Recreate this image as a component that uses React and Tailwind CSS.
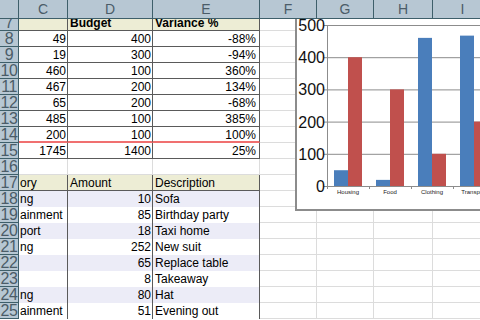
import React from "react";

const font = { fontFamily: '"Liberation Sans", Arial, sans-serif' };

const hdrCell = "h-full shrink-0 bg-[#b7c7d3] border-r border-b border-[#3e5f6a] text-[#4b5c68]";
const dark = "h-full shrink-0 border-r border-b border-[#5a5a5a]";
const light = "h-full shrink-0 border-r border-b border-[#dcdcdc]";

const top = [
  ["49", "400", "-88%"],
  ["19", "300", "-94%"],
  ["460", "100", "360%"],
  ["467", "200", "134%"],
  ["65", "200", "-68%"],
  ["485", "100", "385%"],
  ["200", "100", "100%"],
  ["1745", "1400", "25%"],
];

const expenses = [
  ["ng", "10", "Sofa"],
  ["ainment", "85", "Birthday party"],
  ["port", "18", "Taxi home"],
  ["ng", "252", "New suit"],
  ["", "65", "Replace table"],
  ["", "8", "Takeaway"],
  ["ng", "80", "Hat"],
  ["ainment", "51", "Evening out"],
];

const RowNum = ({ n }) => (
  <div className={`${hdrCell} w-[19px] text-center text-[16px] leading-4 tracking-[-0.5px]`}>{n}</div>
);

const Rest = () => (
  <>
    <div className={`${light} w-[57px]`} />
    <div className={`${light} w-[57px]`} />
    <div className={`${light} w-[59px]`} />
    <div className={`${light} w-[60px]`} />
  </>
);

const Chart = () => {
  const y = (v) => 186 - v * 0.322;
  const data = [
    ["Housing", 49, 400],
    ["Food", 19, 300],
    ["Clothing", 460, 100],
    ["Transport", 467, 200],
  ];
  return (
    <div className="absolute left-[295px] top-[19px] w-[185px] h-[192px] bg-white border-l-2 border-b-2 border-[#8c8c8c] z-10">
      <svg width="183" height="190" viewBox="297 19 183 190" style={font}>
        {[500, 400, 300, 200, 100, 0].map((v) => (
          <g key={v}>
            <line x1="324" x2="480" y1={y(v) + 0.5} y2={y(v) + 0.5} stroke="#8c8c8c" />
            <text x="325" y={y(v) + 6} fontSize="16" textAnchor="end" fill="#111">{v}</text>
          </g>
        ))}
        <line x1="327.5" x2="327.5" y1="25" y2="186" stroke="#8c8c8c" />
        {[327.5, 369.5, 411.5, 453.5].map((x) => (
          <line key={x} x1={x} x2={x} y1="186" y2="189" stroke="#8c8c8c" />
        ))}
        {data.map(([name, a, b], i) => {
          const x = 334 + i * 42;
          return (
            <g key={name}>
              <rect x={x} y={y(a)} width="14" height={186 - y(a)} fill="#4a7ebb" />
              <rect x={x + 14} y={y(b)} width="14" height={186 - y(b)} fill="#c0504d" />
              <text x={x + 14} y="194" fontSize="6" textAnchor="middle" fill="#222">{name}</text>
            </g>
          );
        })}
      </svg>
    </div>
  );
};

export default function App() {
  return (
    <div className="relative w-[480px] h-[320px] overflow-hidden bg-white text-[12px] text-black" style={font}>
      {/* column headers */}
      <div className="relative z-20 flex h-[19px]">
        <div className={`${hdrCell} w-[19px]`} />
        {[["C", 49], ["D", 85], ["E", 107], ["F", 57], ["G", 57], ["H", 59], ["I", 60]].map(([l, w]) => (
          <div
            key={l}
            className={`${hdrCell} text-center text-[14px] leading-[19px] ${
              w === 49 ? "w-[49px]" : w === 85 ? "w-[85px]" : w === 107 ? "w-[107px]" : w === 57 ? "w-[57px]" : w === 59 ? "w-[59px]" : "w-[60px]"
            }`}
          >
            {l}
          </div>
        ))}
      </div>

      {/* row 7, scrolled half under the header */}
      <div className="h-[12px] overflow-hidden">
        <div className="flex h-4 -mt-[4px]">
          <RowNum n="7" />
          <div className={`${dark} w-[49px] bg-[#ededd5]`} />
          <div className={`${dark} w-[85px] bg-[#ededd5] pl-[2px] font-bold leading-4`}>Budget</div>
          <div className={`${dark} w-[107px] bg-[#ededd5] pl-[2px] font-bold leading-4`}>Variance %</div>
          <Rest />
        </div>
      </div>

      {top.map(([c, d, e], i) => {
        const n = 8 + i;
        const b = n === 14 ? "border-b-2 border-b-[#f07070]" : "";
        return (
          <div key={n} className="flex h-4 leading-4">
            <RowNum n={n} />
            <div className={`${dark} ${b} w-[49px] text-right pr-px`}>{c}</div>
            <div className={`${dark} ${b} w-[85px] text-right pr-px`}>{d}</div>
            <div className={`${dark} ${b} w-[107px] text-right pr-[3px]`}>{e}</div>
            <Rest />
          </div>
        );
      })}

      <div className="flex h-4">
        <RowNum n="16" />
        <div className={`${light} w-[49px]`} />
        <div className={`${light} w-[85px]`} />
        <div className={`${light} w-[107px]`} />
        <Rest />
      </div>

      <div className="flex h-4 leading-4">
        <RowNum n="17" />
        <div className={`${dark} w-[49px] bg-[#ededd5] pl-px overflow-hidden`}>ory</div>
        <div className={`${dark} w-[85px] bg-[#ededd5] pl-[2px]`}>Amount</div>
        <div className={`${dark} w-[107px] bg-[#ededd5] pl-[2px]`}>Description</div>
        <Rest />
      </div>

      {expenses.map(([c, d, e], i) => {
        const bg = i % 2 === 0 ? "bg-[#ececf7]" : "bg-white";
        const cell = "h-full shrink-0 border-r border-[#5a5a5a] " + bg;
        return (
          <div key={i} className="flex h-4 leading-4">
            <RowNum n={18 + i} />
            <div className={`${cell} w-[49px] pl-px overflow-hidden whitespace-nowrap`}>{c}</div>
            <div className={`${cell} w-[85px] text-right pr-px`}>{d}</div>
            <div className={`${cell} w-[107px] pl-[2px]`}>{e}</div>
            <Rest />
          </div>
        );
      })}

      <Chart />
    </div>
  );
}
